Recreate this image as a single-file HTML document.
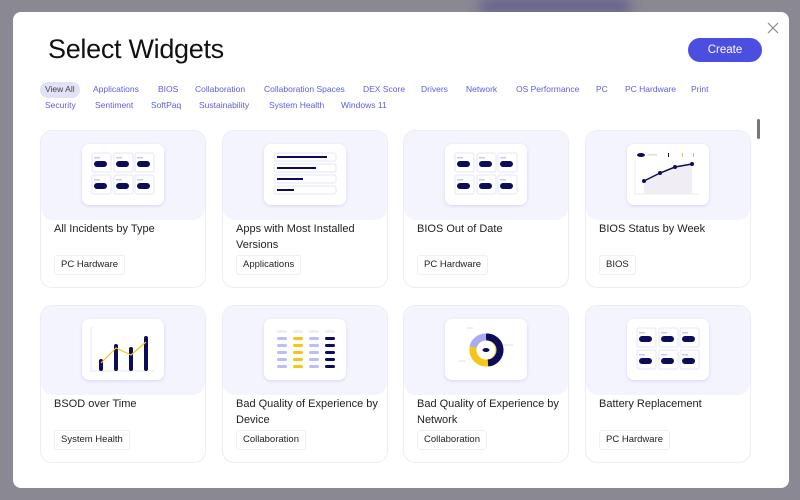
<!DOCTYPE html>
<html><head><meta charset="utf-8">
<style>
*{margin:0;padding:0;box-sizing:border-box}
body{width:800px;height:500px;overflow:hidden;background:#8a8893;font-family:"Liberation Sans",sans-serif;position:relative}
.bg1{position:absolute;left:480px;top:0;width:150px;height:12px;background:#5f5a8c;filter:blur(6px)}
.modal{position:absolute;left:13px;top:12px;width:776px;height:476px;background:#fff;border-radius:8px;overflow:hidden}
h1{position:absolute;left:35px;top:22px;font-size:27px;font-weight:400;color:#111;letter-spacing:-0.3px}
.create{position:absolute;left:675px;top:26px;width:74px;height:24px;border-radius:12px;background:#4b4fe0;color:#fff;font-size:11.5px;text-align:center;line-height:24px}
.close{position:absolute;left:754px;top:10px}
.chip{position:absolute;font-size:8.5px;color:#5b5ee0;white-space:nowrap}
.va{position:absolute;left:27px;top:70px;width:40px;height:16px;border-radius:8px;background:#e1e1f8}
.card{position:absolute;width:166px;height:158px;border:1px solid #ececf6;border-radius:12px;overflow:hidden;background:#fff}
.img{position:absolute;left:0;top:0;width:100%;height:89px;background:#f4f4fe;border-radius:0 0 12px 12px}
.th{position:absolute;left:41px;top:13px;width:82px;height:61px;background:#fff;border-radius:7px;box-shadow:0 1px 3px #d4d4f4}
.th svg{position:absolute;left:0;top:0}
.t{position:absolute;left:13px;top:90px;width:148px;font-size:11px;line-height:16px;color:#222}
.tag{position:absolute;left:13px;top:124px;height:20px;padding:0 6px;border:1px solid #efeff5;border-radius:3px;font-size:9.5px;line-height:18px;color:#222}
.sb{position:absolute;left:744px;top:107px;width:3px;height:20px;border-radius:2px;background:#777}
</style></head><body>
<div class="bg1"></div>
<div class="modal">
<h1>Select Widgets</h1>
<div class="create">Create</div>
<svg class="close" width="12" height="12" viewBox="0 0 12 12"><path d="M1 1L11 11M11 1L1 11" stroke="#888" stroke-width="1.2"/></svg>
<div class="va"></div>
<span class="chip" style="left:32px;top:72px;color:#444">View All</span>
<span class="chip" style="left:80px;top:72px">Applications</span>
<span class="chip" style="left:145px;top:72px">BIOS</span>
<span class="chip" style="left:182px;top:72px">Collaboration</span>
<span class="chip" style="left:251px;top:72px">Collaboration Spaces</span>
<span class="chip" style="left:350px;top:72px">DEX Score</span>
<span class="chip" style="left:408px;top:72px">Drivers</span>
<span class="chip" style="left:453px;top:72px">Network</span>
<span class="chip" style="left:503px;top:72px">OS Performance</span>
<span class="chip" style="left:583px;top:72px">PC</span>
<span class="chip" style="left:612px;top:72px">PC Hardware</span>
<span class="chip" style="left:678px;top:72px">Print</span>
<span class="chip" style="left:32px;top:88px">Security</span>
<span class="chip" style="left:82px;top:88px">Sentiment</span>
<span class="chip" style="left:138px;top:88px">SoftPaq</span>
<span class="chip" style="left:186px;top:88px">Sustainability</span>
<span class="chip" style="left:256px;top:88px">System Health</span>
<span class="chip" style="left:328px;top:88px">Windows 11</span>
<div class="sb"></div>

<div class="card" style="left:27px;top:118px"><div class="img"><div class="th">
<svg width="82" height="61"><g id="g"><g fill="#fff" stroke="#e6e6fa"><rect x="10" y="9" width="19" height="19" rx="2"/><rect x="32" y="9" width="19" height="19" rx="2"/><rect x="53" y="9" width="19" height="19" rx="2"/><rect x="10" y="31" width="19" height="19" rx="2"/><rect x="32" y="31" width="19" height="19" rx="2"/><rect x="53" y="31" width="19" height="19" rx="2"/></g><g fill="#0c0c5a"><rect x="12" y="17" width="13" height="6" rx="3"/><rect x="34" y="17" width="13" height="6" rx="3"/><rect x="55" y="17" width="13" height="6" rx="3"/><rect x="12" y="39" width="13" height="6" rx="3"/><rect x="34" y="39" width="13" height="6" rx="3"/><rect x="55" y="39" width="13" height="6" rx="3"/></g><g fill="#c8c8f4"><rect x="12" y="13" width="6" height="1.5"/><rect x="34" y="13" width="6" height="1.5"/><rect x="55" y="13" width="6" height="1.5"/><rect x="12" y="35" width="6" height="1.5"/><rect x="34" y="35" width="6" height="1.5"/><rect x="55" y="35" width="6" height="1.5"/></g></g></svg>
</div></div><div class="t">All Incidents by Type</div><div class="tag">PC Hardware</div></div>

<div class="card" style="left:209px;top:118px"><div class="img"><div class="th">
<svg width="82" height="61"><g fill="#fff" stroke="#e6e6fa"><rect x="10" y="9" width="62" height="8" rx="2"/><rect x="10" y="20" width="62" height="8" rx="2"/><rect x="10" y="31" width="62" height="8" rx="2"/><rect x="10" y="42" width="62" height="8" rx="2"/></g><g fill="#0c0c5a"><rect x="13" y="12" width="50" height="2"/><rect x="13" y="23" width="39" height="2"/><rect x="13" y="34" width="26" height="2"/><rect x="13" y="45" width="17" height="2"/></g></svg>
</div></div><div class="t">Apps with Most Installed Versions</div><div class="tag">Applications</div></div>

<div class="card" style="left:390px;top:118px"><div class="img"><div class="th">
<svg width="82" height="61"><use href="#g"/></svg>
</div></div><div class="t">BIOS Out of Date</div><div class="tag">PC Hardware</div></div>

<div class="card" style="left:572px;top:118px"><div class="img"><div class="th">
<svg width="82" height="61"><ellipse cx="14" cy="11" rx="4" ry="2" fill="#0c0c5a"/><rect x="20" y="10" width="10" height="1.5" fill="#ddd"/><rect x="41" y="9" width="1" height="4" fill="#0c0c5a"/><rect x="55" y="9" width="1" height="4" fill="#f5c518"/><rect x="66" y="9" width="1" height="4" fill="#bbb"/><path d="M17 37L33 29L48 23L65 20V50H17Z" fill="#f0eef4"/><path d="M8 16V50H72" stroke="#eee" fill="none"/><path d="M17 37L33 29L48 23L65 20" stroke="#0c0c5a" stroke-width="1.5" fill="none"/><g fill="#0c0c5a"><circle cx="17" cy="37" r="2"/><circle cx="33" cy="29" r="2"/><circle cx="48" cy="23" r="2"/><circle cx="65" cy="20" r="2"/></g></svg>
</div></div><div class="t">BIOS Status by Week</div><div class="tag">BIOS</div></div>

<div class="card" style="left:27px;top:293px"><div class="img"><div class="th">
<svg width="82" height="61"><path d="M9 8V52H72" stroke="#e4e4f0" fill="none"/><g fill="#0c0c5a"><rect x="17" y="40" width="4" height="12" rx="2"/><rect x="32" y="25" width="4" height="27" rx="2"/><rect x="47" y="28" width="4" height="24" rx="2"/><rect x="62" y="17" width="4" height="35" rx="2"/></g><path d="M19 44L34 29L49 36L64 23" stroke="#f5c518" stroke-width="1.2" fill="none"/></svg>
</div></div><div class="t">BSOD over Time</div><div class="tag">System Health</div></div>

<div class="card" style="left:209px;top:293px"><div class="img"><div class="th">
<svg width="82" height="61"><g fill="#ededf5"><rect x="13" y="11" width="10" height="3" rx="1.5"/><rect x="29" y="11" width="10" height="3" rx="1.5"/><rect x="45" y="11" width="10" height="3" rx="1.5"/><rect x="61" y="11" width="10" height="3" rx="1.5"/></g>
<g id="r"><rect x="13" y="18" width="10" height="3" rx="1.5" fill="#bdbdf8"/><rect x="29" y="18" width="10" height="3" rx="1.5" fill="#f5c518"/><rect x="45" y="18" width="10" height="3" rx="1.5" fill="#bdbdf8"/><rect x="61" y="18" width="10" height="3" rx="1.5" fill="#0c0c5a"/></g>
<use href="#r" y="7"/><use href="#r" y="14"/><use href="#r" y="21"/><use href="#r" y="28"/></svg>
</div></div><div class="t">Bad Quality of Experience by Device</div><div class="tag">Collaboration</div></div>

<div class="card" style="left:390px;top:293px"><div class="img"><div class="th">
<svg width="82" height="61"><circle cx="41" cy="31" r="13" fill="none" stroke="#f5c518" stroke-width="7"/><path d="M41 18A13 13 0 0 1 43 44" fill="none" stroke="#0c0c5a" stroke-width="7"/><path d="M28 28A13 13 0 0 1 41 18" fill="none" stroke="#a9a9f5" stroke-width="7"/><ellipse cx="41" cy="31" rx="3.5" ry="2" fill="#0c0c5a"/><path d="M22 9H28M58 26H68M14 42H20" stroke="#dde" stroke-width="1"/></svg>
</div></div><div class="t">Bad Quality of Experience by Network</div><div class="tag">Collaboration</div></div>

<div class="card" style="left:572px;top:293px"><div class="img"><div class="th">
<svg width="82" height="61"><use href="#g"/></svg>
</div></div><div class="t">Battery Replacement</div><div class="tag">PC Hardware</div></div>
</div>
</body></html>
